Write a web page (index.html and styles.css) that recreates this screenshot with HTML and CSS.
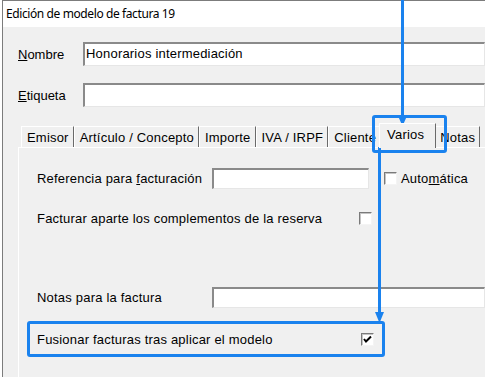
FILE: index.html
```html
<!DOCTYPE html>
<html>

<head>
    <title>Edición de modelo de factura 19</title>
    <link rel="stylesheet" href="styles.css">
</head>

<body>
    <div class="window">
        <div class="titlebar">Edición de modelo de factura 19</div>

        <div class="form">
            <div class="field-row">
                <label class="field-label"><u>N</u>ombre</label>
                <div class="input">Honorarios intermediación</div>
            </div>
            <div class="field-row etiqueta">
                <label class="field-label"><u>E</u>tiqueta</label>
                <div class="input"></div>
            </div>

            <div class="tabs">
                <div class="tab">Emisor</div>
                <div class="tab">Artículo / Concepto</div>
                <div class="tab">Importe</div>
                <div class="tab">IVA / IRPF</div>
                <div class="tab">Cliente</div>
                <div class="tab selected">Varios</div>
                <div class="tab">Notas</div>
            </div>

            <div class="tab-page">
                <div class="page-row">
                    <span class="page-label">Referencia para <u>f</u>acturación</span>
                    <div class="input short"></div>
                    <span class="checkbox"></span>
                    <span class="check-label">Auto<u>m</u>ática</span>
                </div>
                <div class="page-row complementos">
                    <span class="page-label wide">Facturar aparte los complementos de la reserva</span>
                    <span class="checkbox"></span>
                </div>
                <div class="page-row notas">
                    <span class="page-label">Notas para la factura</span>
                    <div class="input"></div>
                </div>
                <div class="page-row fusionar">
                    <span class="page-label wider">Fusionar facturas tras aplicar el modelo</span>
                    <span class="checkbox checked">
                        <svg width="9" height="9" viewBox="0 0 9 9">
                            <polyline points="1,4 3,6.5 8,1.5" fill="none" stroke="#000" stroke-width="2"/>
                        </svg>
                    </span>
                </div>
            </div>
        </div>
    </div>

    <!-- callout annotations drawn over the dialog -->
    <svg class="annotations" width="485" height="377" viewBox="0 0 485 377">
        <g stroke="#1a82ee" fill="none" stroke-width="3">
            <rect x="373.5" y="116.5" width="72" height="35" rx="1.5"/>
            <rect x="28.5" y="322.5" width="355" height="33" rx="1.5"/>
            <line x1="402.5" y1="0" x2="402.5" y2="118"/>
            <line x1="379.5" y1="147" x2="379.5" y2="314"/>
        </g>
        <g fill="#1a82ee">
            <polygon points="398,116 407,116 402.5,126"/>
            <polygon points="375,312 384,312 379.5,323"/>
        </g>
    </svg>
</body>

</html>
```

FILE: styles.css
```css
body {
    margin: 0;
    padding: 0;
    background-color: #fff;
    font-family: "Liberation Sans", Arial, sans-serif;
    font-size: 13px;
    letter-spacing: 0.2px;
    color: #000;
    overflow: hidden;
}

.window {
    margin-left: 2px;
    height: 377px;
    border-left: 1px solid #7c7c7c;
    border-top: 1px solid #7c7c7c;
    background-color: #f0f0f0;
    box-sizing: border-box;
    overflow: hidden;
}

.titlebar {
    height: 26px;
    line-height: 26px;
    padding-left: 3px;
    background-color: #fff;
    font-family: "Noto Sans", sans-serif;
    font-size: 12px;
    letter-spacing: -0.4px;
}

.form {
    padding-top: 15px;
    padding-left: 15px;
}

/* Nombre / Etiqueta */
.field-row {
    display: flex;
    align-items: center;
    height: 24px;
}

.field-row.etiqueta {
    margin-top: 17px;
}

.field-label {
    width: 65px;
    flex-shrink: 0;
    letter-spacing: 0;
}

.input {
    flex: 1;
    height: 100%;
    box-sizing: border-box;
    background-color: #fff;
    border-top: 2px solid #8a8a8a;
    border-left: 2px solid #8a8a8a;
    border-bottom: 1px solid #e6e6e6;
    border-right: 1px solid #e6e6e6;
    padding-left: 1px;
    line-height: 20px;
}

/* Tab strip */
.tabs {
    display: flex;
    align-items: flex-end;
    height: 24px;
    margin-top: 16px;
    padding-left: 3px;
}

.tab {
    height: 21px;
    line-height: 21px;
    padding: 0 4px 0 5px;
    background-color: #f0f0f0;
    border-top: 1px solid #fff;
    border-left: 1px solid #fff;
    border-right: 1px solid #6a6a6a;
    box-sizing: border-box;
    white-space: nowrap;
}

.tab.selected {
    position: relative;
    z-index: 1;
    height: 25px;
    line-height: 21px;
    padding: 0 11px 3px 7px;
    margin: 0 -2px -1px -2px;
}

.tab-page {
    height: 210px;
    border-top: 1px solid #fff;
    border-left: 1px solid #fff;
    padding-left: 18px;
    padding-top: 20px;
}

.page-row {
    display: flex;
    align-items: center;
    height: 21px;
    white-space: nowrap;
}

.page-row.complementos {
    margin-top: 19px;
}

.page-row.notas {
    margin-top: 58px;
}

.page-row.fusionar {
    margin-top: 21px;
}

.page-label {
    width: 175px;
    flex-shrink: 0;
}

.page-label.wide {
    width: 322px;
}

.page-label.wider {
    width: 324px;
}

.input.short {
    flex: none;
    width: 157px;
}

.checkbox {
    display: flex;
    align-items: center;
    justify-content: center;
    width: 13px;
    height: 13px;
    box-sizing: border-box;
    background-color: #fff;
    border-top: 1px solid #7a7a7a;
    border-left: 1px solid #7a7a7a;
    border-bottom: 1px solid #f4f4f4;
    border-right: 1px solid #f4f4f4;
    box-shadow: inset 1px 1px 0 #c4c4c4;
    margin-left: 15px;
}

.complementos .checkbox,
.fusionar .checkbox {
    margin-left: 0;
}

.check-label {
    margin-left: 4px;
}

.annotations {
    position: absolute;
    top: 0;
    left: 0;
}
```
